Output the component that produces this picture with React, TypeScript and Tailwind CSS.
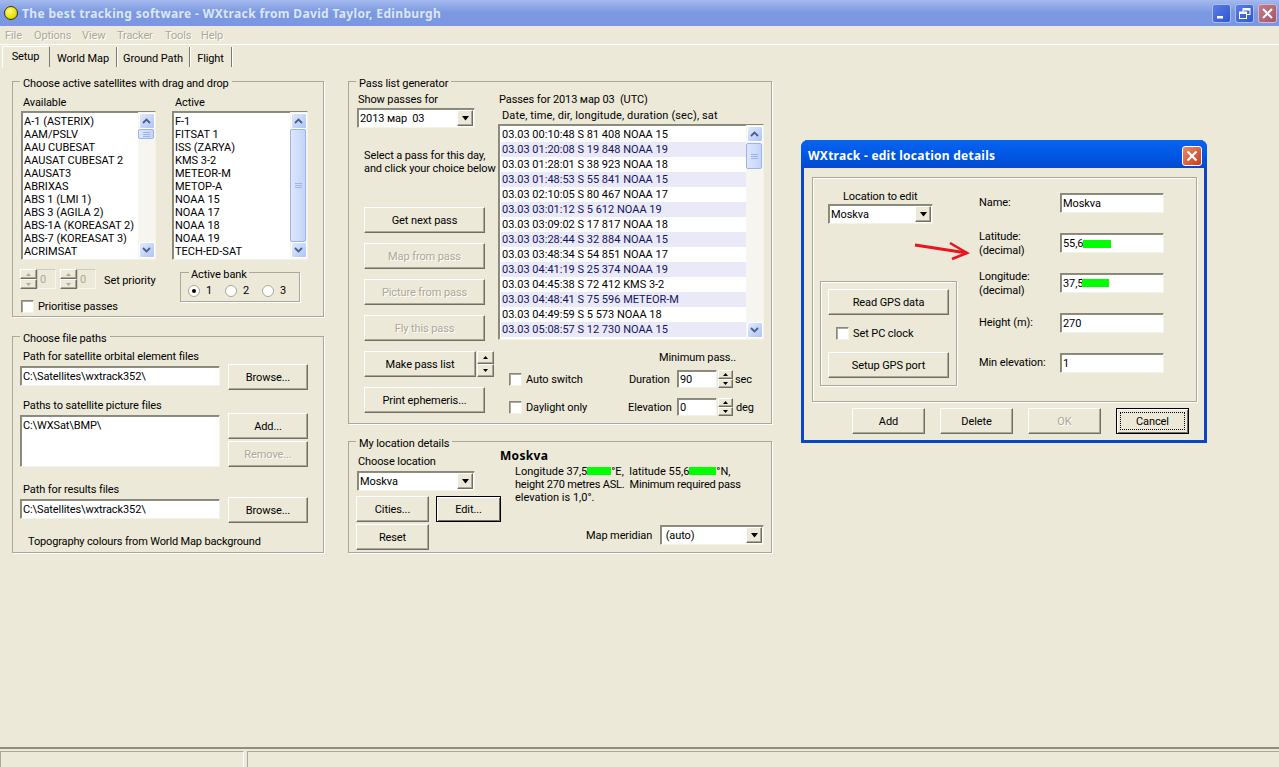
import React from "react";

const raised =
  "border border-t-white border-l-white border-r-[#716f64] border-b-[#716f64] shadow-[inset_-1px_-1px_0_#aca899] bg-[#ece9d8]";
const sunken =
  "bg-white border border-t-[#8a8878] border-l-[#8a8878] border-r-[#f4f3ea] border-b-[#f4f3ea] shadow-[inset_1px_1px_0_#8f8d7f]";
const disabledText = "text-[#aca899] [text-shadow:1px_1px_0_#fff]";

function Btn({
  label,
  cls,
  disabled,
  strong,
  focus,
}: {
  label: string;
  cls: string;
  disabled?: boolean;
  strong?: boolean;
  focus?: boolean;
}) {
  const frame = strong
    ? "border border-black bg-[#ece9d8] shadow-[inset_1px_1px_0_#fff,inset_-1px_-1px_0_#716f64]"
    : raised;
  return (
    <div className={`${frame} ${cls} shrink-0 flex items-center justify-center ${disabled ? disabledText : ""}`}>
      {focus ? (
        <div className="w-[65px] h-[18px] border border-dotted border-black flex items-center justify-center">{label}</div>
      ) : (
        label
      )}
    </div>
  );
}

function Legend({ text, cls }: { text: string; cls: string }) {
  return (
    <legend className={`${cls} leading-[13px]`}>
      <span className="block mt-[2px] -mb-[2px]">{text}</span>
    </legend>
  );
}

function Group({ legend, cls, children }: { legend: string; cls: string; children: React.ReactNode }) {
  return (
    <fieldset className={`border border-[#aca899] shadow-[1px_1px_0_#fff] shrink-0 ${cls}`}>
      <Legend text={legend} cls="ml-[7px] px-[3px]" />
      {children}
    </fieldset>
  );
}

function DownGlyph() {
  return (
    <svg width="9" height="5" viewBox="0 0 9 5">
      <path d="M1 0h7L4.5 4.5z" fill="#000" />
    </svg>
  );
}

function Combo({ value, cls }: { value: string; cls: string }) {
  return (
    <div className={`${sunken} ${cls} shrink-0 flex items-center pl-[2px]`}>
      <span className="flex-1 whitespace-pre">{value}</span>
      <div className={`${raised} w-[16px] h-[16px] flex items-center justify-center mr-px`}>
        <DownGlyph />
      </div>
    </div>
  );
}

function TextBox({ value, cls, children }: { value?: string; cls: string; children?: React.ReactNode }) {
  return (
    <div className={`${sunken} ${cls} shrink-0 pl-[2px] flex items-center relative`}>
      {value}
      {children}
    </div>
  );
}

function Check({ label, cls }: { label: string; cls?: string }) {
  return (
    <div className={`flex items-center gap-[4px] ${cls ?? ""}`}>
      <div className="w-[13px] h-[13px] shrink-0 bg-white border border-t-[#8a8878] border-l-[#8a8878] border-r-[#f4f3ea] border-b-[#f4f3ea] shadow-[inset_1px_1px_0_#aca899]" />
      <span>{label}</span>
    </div>
  );
}

function Radio({ label, on, cls }: { label: string; on?: boolean; cls: string }) {
  return (
    <div className={`flex items-center ${cls}`}>
      <div className="w-[12px] h-[12px] rounded-full bg-white border border-[#a9a798] flex items-center justify-center shrink-0">
        {on && <div className="w-[4px] h-[4px] rounded-full bg-black" />}
      </div>
      <span className="ml-[6px]">{label}</span>
    </div>
  );
}

function ScrollArrow({ up }: { up?: boolean }) {
  return (
    <div className="w-[16px] h-[16px] shrink-0 rounded-[2px] border border-white bg-gradient-to-br from-[#e1eafe] to-[#aec4f6] flex items-center justify-center">
      <svg width="9" height="6" viewBox="0 0 9 6">
        <path d={up ? "M1 5l3.5-3.5L8 5" : "M1 1l3.5 3.5L8 1"} fill="none" stroke="#4d6185" strokeWidth="1.8" />
      </svg>
    </div>
  );
}

function ScrollBar({ thumbTop, thumbH }: { thumbTop: string; thumbH: string }) {
  return (
    <div className="w-[17px] shrink-0 flex flex-col items-center bg-[#f6f5f0] py-px">
      <ScrollArrow up />
      <div className="flex-1 w-full">
        <div
          className={`${thumbTop} ${thumbH} w-[16px] rounded-[2px] border border-[#9db4ea] bg-gradient-to-r from-[#dde7fd] to-[#c3d3fa] flex flex-col items-center justify-center gap-px`}
        >
          <div className="w-[7px] h-px bg-[#9fb4e6]" />
          <div className="w-[7px] h-px bg-[#9fb4e6]" />
          <div className="w-[7px] h-px bg-[#9fb4e6]" />
        </div>
      </div>
      <ScrollArrow />
    </div>
  );
}

function SatList({ items, thumbH }: { items: string[]; thumbH: string }) {
  return (
    <div className={`${sunken} h-[149px] flex`}>
      <div className="flex-1 pl-[2px] pt-[3px] overflow-hidden tracking-normal">
        {items.map((t) => (
          <div key={t} className="h-[13px] leading-[13px] whitespace-nowrap">
            {t}
          </div>
        ))}
      </div>
      <ScrollBar thumbTop="mt-0" thumbH={thumbH} />
    </div>
  );
}

function MiniSpin({ cls, dim }: { cls: string; dim?: boolean }) {
  const c = dim ? "#aca899" : "#000";
  return (
    <div className={`${cls} shrink-0 flex flex-col`}>
      <div className={`${raised} flex-1 flex items-center justify-center`}>
        <svg width="5" height="3" viewBox="0 0 5 3">
          <path d="M0 3h5L2.5 0z" fill={c} />
        </svg>
      </div>
      <div className={`${raised} flex-1 flex items-center justify-center`}>
        <svg width="5" height="3" viewBox="0 0 5 3">
          <path d="M0 0h5L2.5 3z" fill={c} />
        </svg>
      </div>
    </div>
  );
}

function PriorityBox() {
  return (
    <div className="flex">
      <MiniSpin cls="w-[17px] h-[20px]" dim />
      <div className="w-[19px] h-[20px] border border-t-[#cfccbd] border-l-[#cfccbd] border-r-[#f6f5ee] border-b-[#f6f5ee] pl-[2px] flex items-center text-[#aca899]">
        0
      </div>
    </div>
  );
}

function Green({ cls }: { cls: string }) {
  return <span className={`inline-block bg-[#00ff00] h-[8px] ${cls}`} />;
}

const available = [
  "A-1 (ASTERIX)",
  "AAM/PSLV",
  "AAU CUBESAT",
  "AAUSAT CUBESAT 2",
  "AAUSAT3",
  "ABRIXAS",
  "ABS 1 (LMI 1)",
  "ABS 3 (AGILA 2)",
  "ABS-1A (KOREASAT 2)",
  "ABS-7 (KOREASAT 3)",
  "ACRIMSAT",
];
const active = [
  "F-1",
  "FITSAT 1",
  "ISS (ZARYA)",
  "KMS 3-2",
  "METEOR-M",
  "METOP-A",
  "NOAA 15",
  "NOAA 17",
  "NOAA 18",
  "NOAA 19",
  "TECH-ED-SAT",
];
const passes = [
  "03.03 00:10:48 S 81 408 NOAA 15",
  "03.03 01:20:08 S 19 848 NOAA 19",
  "03.03 01:28:01 S 38 923 NOAA 18",
  "03.03 01:48:53 S 55 841 NOAA 15",
  "03.03 02:10:05 S 80 467 NOAA 17",
  "03.03 03:01:12 S 5 612 NOAA 19",
  "03.03 03:09:02 S 17 817 NOAA 18",
  "03.03 03:28:44 S 32 884 NOAA 15",
  "03.03 03:48:34 S 54 851 NOAA 17",
  "03.03 04:41:19 S 25 374 NOAA 19",
  "03.03 04:45:38 S 72 412 KMS 3-2",
  "03.03 04:48:41 S 75 596 METEOR-M",
  "03.03 04:49:59 S 5 573 NOAA 18",
  "03.03 05:08:57 S 12 730 NOAA 15",
];

function TitleButtons() {
  const blue =
    "w-[19px] h-[19px] rounded-[3px] border border-[#a9bdf0] bg-gradient-to-br from-[#5a7de6] to-[#2f55cf] flex items-center justify-center";
  return (
    <div className="flex gap-[4px] mr-[2px]">
      <div className={blue}>
        <svg width="13" height="13" viewBox="0 0 13 13">
          <rect x="2" y="9" width="6" height="2.5" fill="#fff" />
        </svg>
      </div>
      <div className={blue}>
        <svg width="13" height="13" viewBox="0 0 13 13" fill="none" stroke="#fff">
          <rect x="5" y="1.5" width="7" height="6" />
          <path d="M5 2.5h7" strokeWidth="2" />
          <rect x="1.5" y="5" width="7" height="6.5" fill="#4265d8" />
          <path d="M1.5 6h7" strokeWidth="2" />
        </svg>
      </div>
      <div className="w-[19px] h-[19px] rounded-[3px] border border-[#d8b8c4] bg-gradient-to-br from-[#c27c8c] to-[#a45468] flex items-center justify-center">
        <svg width="13" height="13" viewBox="0 0 13 13">
          <path d="M2 2l9 9M11 2l-9 9" stroke="#fff" strokeWidth="2" />
        </svg>
      </div>
    </div>
  );
}

function Dialog() {
  const labelRow = "flex items-start h-[20px]";
  return (
    <div className="absolute left-[801px] top-[140px] w-[406px] h-[303px] rounded-t-[7px] bg-[#0b44c4] px-[3px] pb-[3px] flex flex-col">
      <div className="h-[28px] -mx-[3px] shrink-0 rounded-t-[7px] bg-gradient-to-b from-[#0a62f0] via-[#0058e6] to-[#0348cf] flex items-center justify-between pl-[7px] pr-[5px] pt-[3px]">
        <span className="text-white font-bold text-[12px] tracking-[0.25px] font-['Noto_Sans',sans-serif]">WXtrack - edit location details</span>
        <div className="w-[20px] h-[20px] rounded-[3px] border border-white bg-gradient-to-br from-[#e98a68] to-[#c83a1c] flex items-center justify-center">
          <svg width="14" height="14" viewBox="0 0 14 14">
            <path d="M2.5 2.5l9 9M11.5 2.5l-9 9" stroke="#fff" strokeWidth="2.2" />
          </svg>
        </div>
      </div>
      <div className="flex-1 bg-[#ece9d8] relative">
        <div className="mt-[9px] ml-[8px] w-[385px] h-[225px] border border-[#aca899] shadow-[inset_1px_1px_0_#fff,1px_1px_0_#fff] flex">
          <div className="w-[166px] shrink-0">
            <div className="mt-[12px] ml-[30px] leading-[13px]">Location to edit</div>
            <Combo value="Moskva" cls="ml-[15px] mt-px w-[105px] h-[20px]" />
            <div className="mt-[57px] ml-[7px] w-[137px] h-[105px] border border-[#aca899] shadow-[inset_1px_1px_0_#fff,1px_1px_0_#fff] pt-[7px] pl-[7px]">
              <Btn label="Read GPS data" cls="w-[121px] h-[26px]" />
              <Check label="Set PC clock" cls="ml-[8px] mt-[12px]" />
              <Btn label="Setup GPS port" cls="w-[121px] h-[26px] mt-[12px]" />
            </div>
          </div>
          <div className="pt-[15px] flex flex-col gap-[20px]">
            <div className={labelRow}>
              <div className="w-[81px] mt-[3px] leading-[13px]">Name:</div>
              <TextBox value="Moskva" cls="w-[104px] h-[20px]" />
            </div>
            <div className={labelRow}>
              <div className="w-[81px] -mt-[3px] leading-[14px]">
                Latitude:
                <br />
                (decimal)
              </div>
              <TextBox value="55,6" cls="w-[104px] h-[20px]">
                <Green cls="absolute left-[22px] top-[6px] w-[28px]" />
              </TextBox>
            </div>
            <div className={labelRow}>
              <div className="w-[81px] -mt-[3px] leading-[14px]">
                Longitude:
                <br />
                (decimal)
              </div>
              <TextBox value="37,5" cls="w-[104px] h-[20px]">
                <Green cls="absolute left-[21px] top-[5px] w-[27px]" />
              </TextBox>
            </div>
            <div className={labelRow}>
              <div className="w-[81px] mt-[3px] leading-[13px]">Height (m):</div>
              <TextBox value="270" cls="w-[104px] h-[20px]" />
            </div>
            <div className={labelRow}>
              <div className="w-[81px] mt-[3px] leading-[13px]">Min elevation:</div>
              <TextBox value="1" cls="w-[104px] h-[20px]" />
            </div>
          </div>
        </div>
        <div className="mt-[6px] ml-[48px] flex gap-[15px]">
          <Btn label="Add" cls="w-[73px] h-[26px]" />
          <Btn label="Delete" cls="w-[73px] h-[26px]" />
          <Btn label="OK" disabled cls="w-[73px] h-[26px]" />
          <Btn label="Cancel" strong focus cls="w-[73px] h-[26px]" />
        </div>
      </div>
    </div>
  );
}

const menuItems: [string, string][] = [
  ["File", "w-[29px]"],
  ["Options", "w-[48px]"],
  ["View", "w-[35px]"],
  ["Tracker", "w-[48px]"],
  ["Tools", "w-[36px]"],
  ["Help", "w-[30px]"],
];

export default function App() {
  return (
    <div className="relative w-[1279px] h-[767px] overflow-hidden bg-[#ece9d8] text-black text-[11px] leading-[13px] tracking-[-0.1px] font-['Roboto',sans-serif] flex flex-col">
      {/* title bar */}
      <div className="h-[26px] shrink-0 bg-gradient-to-b from-[#a3b9ee] via-[#7b98e0] to-[#7c97e2] flex items-center justify-between pl-[4px]">
        <div className="flex items-center gap-[4px]">
          <div className="w-[14px] h-[14px] rounded-full border border-[#33361a] bg-[radial-gradient(circle_at_40%_35%,#fffb80,#e8e000_60%,#a8a400)]" />
          <span className="text-[#dbe6fa] font-bold text-[12px] tracking-[0.35px] whitespace-nowrap font-['Noto_Sans',sans-serif]">
            The best tracking software - WXtrack from David Taylor, Edinburgh
          </span>
        </div>
        <TitleButtons />
      </div>
      {/* menu */}
      <div className={`h-[18px] shrink-0 flex items-center pl-[5px] ${disabledText}`}>
        {menuItems.map(([m, w]) => (
          <span key={m} className={w}>
            {m}
          </span>
        ))}
      </div>
      {/* tabs */}
      <div className="h-[24px] shrink-0 border-t border-white flex items-start pl-[2px]">
        <div className="w-[46px] h-[22px] mt-px flex items-center justify-center pb-[2px] border-t border-l border-white">Setup</div>
        <div className="w-[68px] mt-[2px] h-[20px] flex items-center justify-center pt-[2px] ml-px border-l border-r border-l-[#7c7a6c] border-r-[#7c7a6c] shadow-[1px_0_0_#fff]">
          World Map
        </div>
        <div className="w-[73px] mt-[2px] h-[20px] flex items-center justify-center pt-[2px] border-r border-r-[#7c7a6c] shadow-[1px_0_0_#fff]">
          Ground Path
        </div>
        <div className="w-[42px] mt-[2px] h-[20px] flex items-center justify-center pt-[2px] border-r border-r-[#7c7a6c] shadow-[1px_0_0_#fff]">
          Flight
        </div>
      </div>
      {/* main */}
      <div className="flex-1 flex items-start pl-[12px] pt-[7px] gap-[24px]">
        <div className="flex flex-col gap-[13px]">
          <Group legend="Choose active satellites with drag and drop" cls="w-[312px] h-[242px]">
            <div className="flex gap-[16px] mt-[8px] ml-[8px]">
              <div className="w-[135px]">
                <div className="ml-[2px] mb-[2px]">Available</div>
                <SatList items={available} thumbH="h-[10px]" />
              </div>
              <div className="w-[136px]">
                <div className="ml-[3px] mb-[2px]">Active</div>
                <SatList items={active} thumbH="h-[113px]" />
              </div>
            </div>
            <div className="flex mt-[6px] ml-[7px]">
              <div className="w-[160px] pt-[3px]">
                <div className="flex items-center gap-[4px]">
                  <PriorityBox />
                  <PriorityBox />
                  <span className="ml-[4px] translate-y-px">Set priority</span>
                </div>
                <Check label="Prioritise passes" cls="mt-[11px] ml-px" />
              </div>
              <fieldset className="w-[120px] h-[36px] border border-[#aca899] shadow-[1px_1px_0_#fff]">
                <Legend text="Active bank" cls="ml-[8px] px-[2px]" />
                <div className="flex pl-[7px] mt-[5px]">
                  <Radio label="1" on cls="w-[37px]" />
                  <Radio label="2" cls="w-[37px]" />
                  <Radio label="3" cls="w-[37px]" />
                </div>
              </fieldset>
            </div>
          </Group>
          <Group legend="Choose file paths" cls="w-[312px] h-[223px]">
            <div className="ml-[10px] mt-[7px] mb-px">Path for satellite orbital element files</div>
            <div className="flex gap-[8px] ml-[7px]">
              <TextBox value="C:\Satellites\wxtrack352\" cls="w-[200px] h-[20px] mt-[2px]" />
              <Btn label="Browse..." cls="w-[80px] h-[26px]" />
            </div>
            <div className="ml-[10px] mt-[9px] mb-px">Paths to satellite picture files</div>
            <div className="flex gap-[8px] ml-[7px]">
              <div className={`${sunken} w-[200px] h-[52px] mt-[2px] pl-[2px] pt-[3px]`}>C:\WXSat\BMP\</div>
              <div className="flex flex-col gap-[2px]">
                <Btn label="Add..." cls="w-[80px] h-[26px]" />
                <Btn label="Remove..." disabled cls="w-[80px] h-[26px]" />
              </div>
            </div>
            <div className="ml-[10px] mt-[16px] mb-px">Path for results files</div>
            <div className="flex gap-[8px] ml-[7px]">
              <TextBox value="C:\Satellites\wxtrack352\" cls="w-[200px] h-[20px] mt-[2px]" />
              <Btn label="Browse..." cls="w-[80px] h-[26px]" />
            </div>
            <div className="ml-[15px] mt-[12px] tracking-[-0.15px]">Topography colours from World Map background</div>
          </Group>
        </div>
        <div className="flex flex-col gap-[11px]">
          <Group legend="Pass list generator" cls="w-[424px] h-[349px]">
            <div className="flex">
              <div className="w-[149px] shrink-0">
                <div className="ml-[9px] mt-[5px]">Show passes for</div>
                <Combo value="2013 мар  03" cls="ml-[8px] mt-[2px] w-[118px] h-[20px]" />
                <div className="ml-[15px] mt-[21px] whitespace-nowrap">
                  Select a pass for this day,
                  <br />
                  and click your choice below
                </div>
                <div className="ml-[15px] mt-[32px] flex flex-col gap-[10px]">
                  <Btn label="Get next pass" cls="w-[121px] h-[26px]" />
                  <Btn label="Map from pass" disabled cls="w-[121px] h-[26px]" />
                  <Btn label="Picture from pass" disabled cls="w-[121px] h-[26px]" />
                  <Btn label="Fly this pass" disabled cls="w-[121px] h-[26px]" />
                  <div className="flex gap-px">
                    <Btn label="Make pass list" cls="w-[112px] h-[26px]" />
                    <MiniSpin cls="w-[17px] h-[26px]" />
                  </div>
                  <Btn label="Print ephemeris..." cls="w-[121px] h-[26px]" />
                </div>
              </div>
              <div className="w-[266px] shrink-0">
                <div className="ml-px mt-[5px]">Passes for 2013 мар 03&nbsp; (UTC)</div>
                <div className="ml-[4px] mt-[3px] tracking-[0.13px]">Date, time, dir, longitude, duration (sec), sat</div>
                <div className={`${sunken} mt-[2px] h-[216px] flex`}>
                  <div className="flex-1 pt-[2px] pl-[2px] overflow-hidden tracking-normal">
                    {passes.map((p, i) => (
                      <div
                        key={p}
                        className={`h-[15px] leading-[15px] pl-px whitespace-nowrap ${
                          i % 2 ? "bg-[#e9e9f8] text-[#14145a]" : ""
                        }`}
                      >
                        {p}
                      </div>
                    ))}
                  </div>
                  <ScrollBar thumbTop="mt-px" thumbH="h-[26px]" />
                </div>
                <div className="ml-[161px] mt-[11px]">Minimum pass..</div>
                <div className="mt-[6px] flex items-center h-[18px] pl-[11px]">
                  <Check label="Auto switch" cls="w-[120px]" />
                  <div className="w-[48px]">Duration</div>
                  <TextBox value="90" cls="w-[40px] h-[18px]" />
                  <MiniSpin cls="w-[15px] h-[18px] ml-px" />
                  <div className="ml-[2px]">sec</div>
                </div>
                <div className="mt-[10px] flex items-center h-[18px] pl-[11px]">
                  <Check label="Daylight only" cls="w-[119px]" />
                  <div className="w-[49px]">Elevation</div>
                  <TextBox value="0" cls="w-[40px] h-[18px]" />
                  <MiniSpin cls="w-[15px] h-[18px] ml-px" />
                  <div className="ml-[3px]">deg</div>
                </div>
              </div>
            </div>
          </Group>
          <Group legend="My location details" cls="w-[424px] h-[118px]">
            <div className="flex">
              <div className="w-[144px] ml-[7px] shrink-0">
                <div className="ml-[2px] mt-[7px]">Choose location</div>
                <Combo value="Moskva" cls="ml-px mt-[3px] w-[118px] h-[20px]" />
                <div className="flex gap-[7px] mt-[5px]">
                  <Btn label="Cities..." cls="w-[73px] h-[26px]" />
                  <Btn label="Edit..." strong cls="w-[65px] h-[26px]" />
                </div>
                <Btn label="Reset" cls="w-[73px] h-[26px] mt-[2px]" />
              </div>
              <div className="w-[264px] shrink-0">
                <div className="mt-px font-bold text-[12px] tracking-[0.3px] font-['Noto_Sans',sans-serif]">Moskva</div>
                <div className="ml-[15px] mt-[3px] whitespace-nowrap tracking-normal">
                  Longitude 37,5
                  <Green cls="w-[24px]" />
                  °E,&nbsp; latitude 55,6
                  <Green cls="w-[27px]" />
                  °N,
                  <br />
                  <span className="tracking-[-0.2px]">height 270 metres ASL.&nbsp; Minimum required pass</span>
                  <br />
                  elevation is 1,0°.
                </div>
                <div className="flex items-center mt-[21px] ml-[86px]">
                  <div className="w-[74px]">Map meridian</div>
                  <Combo value=" (auto)" cls="w-[104px] h-[20px]" />
                </div>
              </div>
            </div>
          </Group>
        </div>
      </div>
      {/* status bar */}
      <div className="h-[20px] shrink-0 border-t-2 border-t-[#8f8d7f] flex gap-[3px] pt-[2px]">
        <div className="w-[244px] border-t border-r border-t-[#aca899] border-r-white shadow-[inset_1px_0_0_#aca899]" />
        <div className="flex-1 border-t border-l border-[#aca899]" />
      </div>
      <Dialog />
      <svg className="absolute left-[912px] top-[238px]" width="60" height="25" viewBox="0 0 60 25">
        <path d="M3 7L55 15" stroke="#ea141c" strokeWidth="2.8" fill="none" />
        <path d="M38 5L55 15L40 21" stroke="#ea141c" strokeWidth="2.6" fill="none" />
      </svg>
    </div>
  );
}
